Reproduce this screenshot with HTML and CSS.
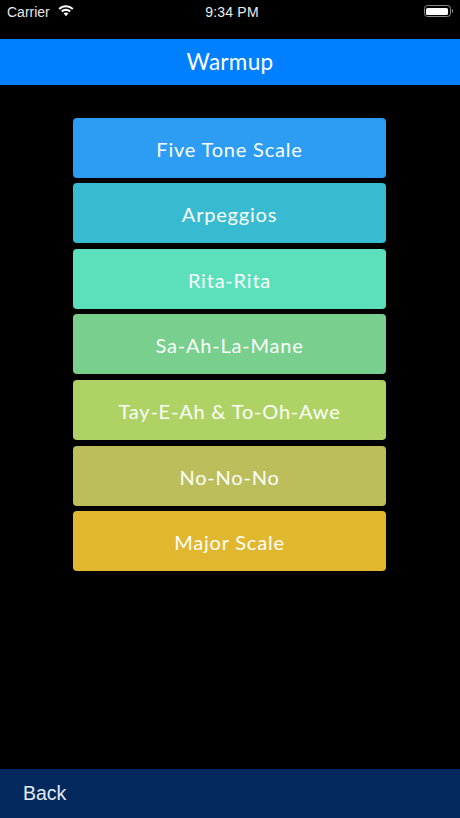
FILE: index.html
```html
<!DOCTYPE html>
<html lang="en">
<head>
<meta charset="utf-8">
<title>Warmup</title>
<link rel="stylesheet" href="styles.css">
</head>
<body>
<div class="app">
  <header class="status">
    <div class="status-left">
      <span>Carrier</span>
      <svg class="wifi" width="16" height="12" viewBox="0 0 16 12"><path d="M8 .2C5.100.2 2.500 1.300.5 3.200l1.400 1.500A8.800 8.800 0 0 1 8 2.300c2.400 0 4.500.9 6.100 2.400l1.400-1.500A10.900 10.900 0 0 0 8 .2z" fill="#fff"/><path d="M8 3.800c-1.900 0-3.600.7-4.900 1.900l1.400 1.500C5.400 6.400 6.600 5.900 8 5.900s2.600.5 3.500 1.300l1.400-1.500A7.200 7.200 0 0 0 8 3.800z" fill="#fff"/><path d="M8 7.400c-1 0-1.900.4-2.500.9L8 11.200l2.500-2.900c-.6-.5-1.500-.9-2.500-.9z" fill="#fff"/></svg>
    </div>
    <div class="status-time">9:34 PM</div>
    <div class="status-right">
      <span class="battery"><span class="battery-level"></span></span><span class="battery-cap"></span>
    </div>
  </header>
  <div class="navbar">Warmup</div>
  <main class="list">
    <a class="item c1">Five Tone Scale</a>
    <a class="item c2">Arpeggios</a>
    <a class="item c3">Rita-Rita</a>
    <a class="item c4">Sa-Ah-La-Mane</a>
    <a class="item c5">Tay-E-Ah &amp; To-Oh-Awe</a>
    <a class="item c6">No-No-No</a>
    <a class="item c7">Major Scale</a>
  </main>
  <footer class="toolbar"><a class="back">Back</a></footer>
</div>
</body>
</html>
```
FILE: styles.css
```css
* { box-sizing: border-box; }
html, body { margin: 0; height: 100%; background: #000; }
.app {
  width: 460px;
  height: 818px;
  display: flex;
  flex-direction: column;
  background: #000;
  color: #fff;
  font-family: "Liberation Sans", Arial, sans-serif;
}
.status {
  height: 39px;
  flex: none;
  display: grid;
  grid-template-columns: 1fr auto 1fr;
  padding: 3px 7px 0;
  font-size: 14px;
  line-height: 18px;
  align-items: start;
}
.status-left { display: flex; align-items: center; gap: 8px; color: #e6e6e6; }
.wifi { margin-top: -2px; }
.status-time { color: #eee; font-size: 14px; letter-spacing: .2px; padding-left: 4px; }
.status-right { display: flex; justify-content: flex-end; align-items: center; height: 16px; }
.battery {
  width: 27px;
  height: 12px;
  border: 1px solid #8a8a8a;
  border-radius: 3.500px;
  padding: 1.500px;
  display: block;
}
.battery-level { display: block; height: 100%; background: #fff; border-radius: 1.500px; }
.battery-cap { width: 1.500px; height: 4px; background: #8a8a8a; margin-left: 1px; border-radius: 0 1px 1px 0; }
.navbar {
  height: 46px;
  flex: none;
  background: #007fff;
  display: flex;
  align-items: center;
  justify-content: center;
  font-family: "Lato", sans-serif;
  font-size: 22.500px;
  letter-spacing: .3px;
  padding-bottom: 1px;
}
.list {
  flex: 1;
  display: flex;
  flex-direction: column;
  gap: 5.600px;
  padding: 32.700px 74px 0 73px;
}
.item {
  height: 60px;
  flex: none;
  border-radius: 4px;
  display: flex;
  align-items: center;
  justify-content: center;
  padding-top: 2px;
  font-family: "Lato", sans-serif;
  font-size: 20px;
  letter-spacing: .8px;
  color: #fafffa;
}
.c1 { background: #2d9df4; }
.c2 { background: #38bbd0; }
.c3 { background: #5ce0bb; }
.c4 { background: #79cf8d; }
.c5 { background: #aed364; }
.c6 { background: #bcbe5c; }
.c7 { background: #e2b730; }
.toolbar {
  height: 49px;
  flex: none;
  background: #02285e;
  display: flex;
  align-items: center;
  padding: 0 23px 0;
}
.back { color: #e4eaf2; font-size: 19.500px; font-family: "Liberation Sans", Arial, sans-serif; }
```
